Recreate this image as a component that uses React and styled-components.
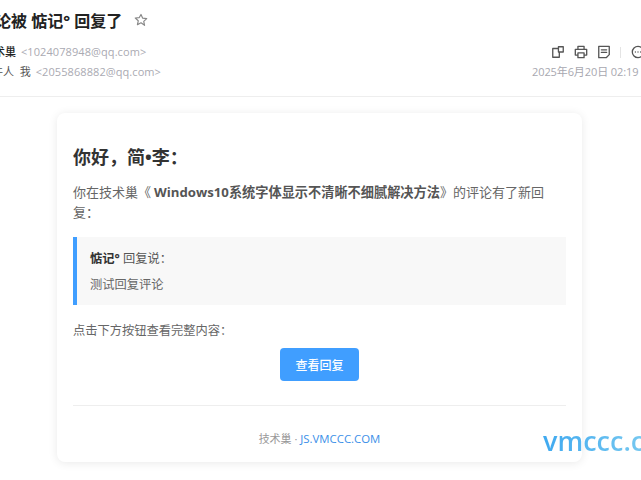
import React from 'react'
import styled, { createGlobalStyle } from 'styled-components'

const GlobalStyle = createGlobalStyle`
  html, body {
    margin: 0;
    padding: 0;
    background: #fff;
    overflow: hidden;
  }
  body {
    font-family: "Open Sans", "Noto Sans CJK SC", sans-serif;
  }
`

const Page = styled.div`
  position: relative;
  width: 641px;
  height: 480px;
  overflow: hidden;
`

const Header = styled.header`
  height: 97px;
  box-sizing: border-box;
  border-bottom: 1px solid #eeeeee;
  padding-top: 7px;
  margin-bottom: 16px;
`

const TitleRow = styled.div`
  display: flex;
  align-items: center;
  gap: 12px;
  height: 26px;
  margin-left: -21px;
  white-space: nowrap;
`

const Title = styled.h1`
  margin: 0;
  font-size: 16px;
  font-weight: 700;
  color: #222;
`

const MetaRow = styled.div`
  display: flex;
  justify-content: space-between;
  margin-top: 9px;
`

const Addresses = styled.div`
  font-size: 11px;
  line-height: 20px;
  white-space: nowrap;
`

const FromLine = styled.div`
  margin-left: -17px;
  color: #222;
  b { font-weight: 500; }
`

const ToLine = styled.div`
  margin-left: -19px;
  color: #555;
`

const Mail = styled.span`
  margin-left: 5px;
  letter-spacing: 0.08px;
  color: #aaaab2;
`

const MetaRight = styled.div`
  display: flex;
  flex-direction: column;
  align-items: flex-start;
  width: 109px;
  margin-top: 1px;
`

const Tools = styled.div`
  display: flex;
  align-items: center;
  gap: 9px;
  height: 18px;
  margin-left: 19px;
  white-space: nowrap;
`

const ToolSep = styled.span`
  width: 1px;
  height: 11px;
  background: #e4e4e4;
  margin-right: 1px;
`

const Stamp = styled.div`
  font-size: 11px;
  line-height: 20px;
  margin-top: 1px;
  letter-spacing: -0.1px;
  color: #a8a8b0;
  white-space: nowrap;
`

const Card = styled.article`
  width: 525px;
  height: 349px;
  box-sizing: border-box;
  margin-left: 57px;
  padding: 31px 16px 0;
  border-radius: 8px;
  background: #fff;
  box-shadow: 0 1px 10px rgba(0, 0, 0, 0.09);
`

const Greeting = styled.h2`
  margin: 0 0 12px;
  font-size: 18px;
  line-height: 26px;
  font-weight: 700;
  color: #333;
`

const Text = styled.p`
  margin: 0;
  font-size: 13px;
  line-height: 20px;
  color: #666;
  strong { margin-left: 3px; color: #555; font-weight: 700; font-size: 13.2px; }
`

const Quote = styled.blockquote`
  margin: 15px 0 17px;
  height: 68px;
  box-sizing: border-box;
  padding: 12px 13px;
  background: #f8f8f8;
  border-left: 4px solid #409eff;
`

const QuoteHead = styled.div`
  font-size: 12.25px;
  line-height: 20px;
  color: #555;
  b { color: #333; font-weight: 700; }
`

const QuoteBody = styled.div`
  margin-top: 6px;
  font-size: 12.25px;
  line-height: 20px;
  color: #666;
`

const Hint = styled(Text)`
  font-size: 12.25px;
  line-height: 18px;
`

const ButtonRow = styled.div`
  display: flex;
  justify-content: center;
  margin-top: 8px;
`

const ReplyButton = styled.a`
  display: flex;
  align-items: center;
  justify-content: center;
  width: 79px;
  height: 33px;
  border-radius: 4px;
  background: #409eff;
  color: #fff;
  font-size: 12px;
  font-weight: 500;
`

const Rule = styled.hr`
  margin: 24px 0 0;
  border: 0;
  border-top: 1px solid #eeeeee;
`

const Footer = styled.footer`
  margin-top: 24px;
  text-align: center;
  font-size: 11px;
  line-height: 18px;
  color: #999;
  a { color: #3b8fe8; font-size: 11.4px; }
`

const Watermark = styled.div`
  position: absolute;
  left: 543px;
  top: 424px;
  font-family: "Open Sans", sans-serif;
  font-size: 27px;
  font-weight: 600;
  line-height: 34px;
  white-space: nowrap;
  background: linear-gradient(90deg, #3fa9f0, #7fcdf0);
  -webkit-background-clip: text;
  background-clip: text;
  color: transparent;
`

const Star = () => (
  <svg width="14" height="14" viewBox="0 0 24 24" fill="none" stroke="#888" strokeWidth="2" strokeLinejoin="round">
    <path d="M12 2.5l2.9 6.3 6.9.8-5.1 4.7 1.4 6.8L12 16.8l-6.1 3.3 1.4-6.8-5.1-4.7 6.9-.8z" />
  </svg>
)

const ToolIcon = ({ children }) => (
  <svg width="14" height="14" viewBox="0 0 16 16" fill="none" stroke="#555" strokeWidth="1.5" strokeLinejoin="round" strokeLinecap="round">
    {children}
  </svg>
)

export default function App() {
  return (
    <Page>
      <GlobalStyle />
      <Header>
        <TitleRow>
          <Title>评论被 惦记° 回复了</Title>
          <Star />
        </TitleRow>
        <MetaRow>
          <Addresses>
            <FromLine><b>技术巢</b><Mail>&lt;1024078948@qq.com&gt;</Mail></FromLine>
            <ToLine>收件人&nbsp; 我<Mail>&lt;2055868882@qq.com&gt;</Mail></ToLine>
          </Addresses>
          <MetaRight>
            <Tools>
              <ToolIcon>
                <path d="M8.5 2h5.5v6H8.5zM8.5 4H2v10h7.5v-6" />
              </ToolIcon>
              <ToolIcon>
                <path d="M4.5 5V1.5h7V5M4.5 11.5H1.5V5h13v6.5h-3M4.5 9h7v5.5h-7z" />
              </ToolIcon>
              <ToolIcon>
                <path d="M2 1.5h12v9.5l-3.5 3.5H2zM5 5.5h6M5 8.5h6" />
              </ToolIcon>
              <ToolSep />
              <ToolIcon>
                <circle cx="8" cy="8" r="6.5" />
                <path d="M5 8h.01M8 8h.01M11 8h.01" />
              </ToolIcon>
            </Tools>
            <Stamp>2025年6月20日 02:19</Stamp>
          </MetaRight>
        </MetaRow>
      </Header>
      <Card>
        <Greeting>你好，简•李：</Greeting>
        <Text>你在技术巢《<strong>Windows10系统字体显示不清晰不细腻解决方法</strong>》的评论有了新回复：</Text>
        <Quote>
          <QuoteHead><b>惦记°</b> 回复说：</QuoteHead>
          <QuoteBody>测试回复评论</QuoteBody>
        </Quote>
        <Hint>点击下方按钮查看完整内容：</Hint>
        <ButtonRow>
          <ReplyButton>查看回复</ReplyButton>
        </ButtonRow>
        <Rule />
        <Footer>技术巢 · <a>JS.VMCCC.COM</a></Footer>
      </Card>
      <Watermark>vmccc.cc</Watermark>
    </Page>
  )
}
